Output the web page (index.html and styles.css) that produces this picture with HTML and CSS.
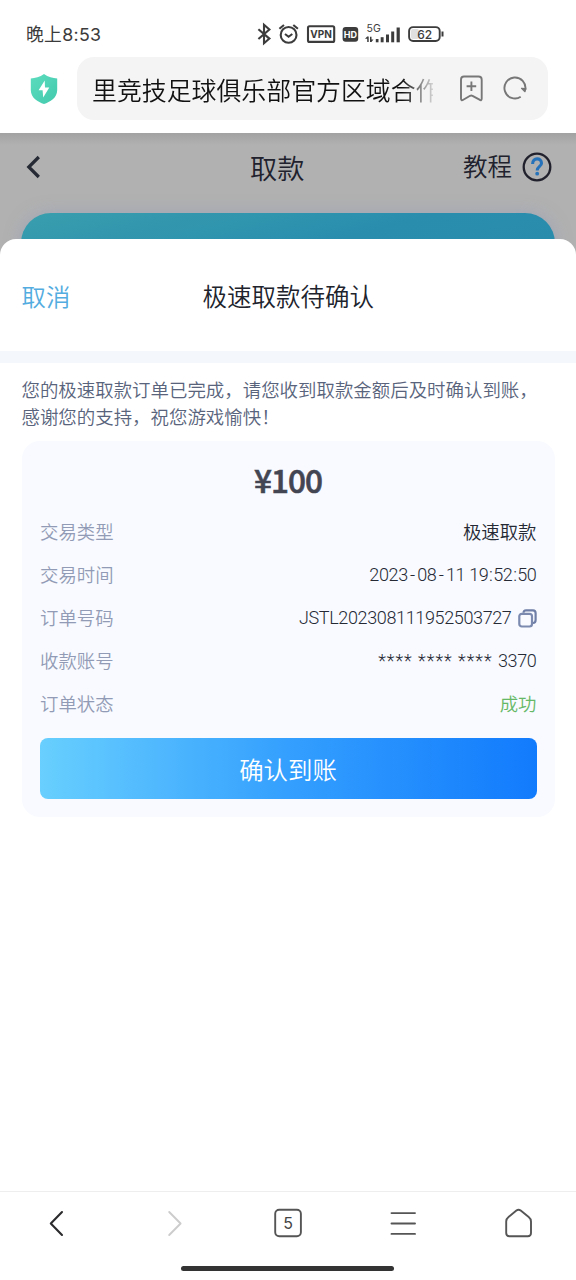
FILE: index.html
```html
<!DOCTYPE html>
<html lang="zh-CN">
<head>
<meta charset="utf-8">
<title>取款</title>
<link rel="stylesheet" href="styles.css">
</head>
<body>
<div class="phone">
  <header class="status">
    <span class="clock">晚上8:53</span>
    <svg class="status-icons" width="200" height="30" viewBox="250 20 200 30">
      <g fill="none" stroke="#3c3c3c" stroke-width="2.1" stroke-linejoin="miter">
        <path d="M258.4 29.2 269.4 38.6 264 43.2V24.800L269.400 29.500 258.400 39"/>
        <circle cx="288.600" cy="34.900" r="7.900"/>
        <path d="M285 34 288.600 36.800 292.300 34M279.400 28.800 284 25M297.900 28.800 293.300 25"/>
        <rect x="308" y="26.300" width="26.200" height="15.600" rx="1.500"/>
        <rect x="409.100" y="27.100" width="30.600" height="13.900" rx="4" stroke-width="1.900"/>
      </g>
      <rect x="342.600" y="27" width="15.600" height="14.800" rx="3" fill="#3c3c3c"/>
      <rect x="411" y="29" width="8" height="10" rx="2" fill="#e0e0e0"/>
      <path d="M442.500 31.500v5" stroke="#3c3c3c" stroke-width="2"/>
      <g fill="#3c3c3c">
        <rect x="375.800" y="39" width="2.700" height="3.300"/>
        <rect x="380.700" y="37.200" width="2.900" height="5.100"/>
        <rect x="386" y="34.500" width="3" height="7.800"/>
        <rect x="391.200" y="31.500" width="3" height="10.800"/>
        <rect x="396.600" y="27.500" width="3.200" height="14.800"/>
        <path d="M365 38.800 367.200 36.500H368.700V42H367.200V38.800ZM370 36.800V42H371.500L373.500 39.600H371.500V36.800Z"/>
      </g>
      <g class="status-text" text-anchor="middle">
        <text x="321.100" y="37.700" font-size="10" font-weight="700">VPN</text>
        <text x="350.400" y="37.600" font-size="9" font-weight="700" class="hd">HD</text>
        <text x="373.700" y="32" font-size="10.500">5G</text>
        <text x="424.700" y="38.500" font-size="12" font-weight="500">62</text>
      </g>
    </svg>
  </header>
  <div class="browser-bar">
    <svg class="shield" width="28" height="32" viewBox="0 0 28 32">
      <defs><linearGradient id="shield-fill" x1="0" y1="0" x2="1" y2="1"><stop offset="0" stop-color="#5cdcbf"/><stop offset="1" stop-color="#43c9ac"/></linearGradient></defs>
      <path d="M14 1 C18 4 23 5 27.200 5.500V17C27.200 25 20 29 14 31 8 29 .8 25 .8 17V5.500C5 5 10 4 14 1Z" fill="url(#shield-fill)"/>
      <path d="M14.700 7.500 8.600 17.200H12.600L13.200 24.600 19.300 14.400H15Z" fill="#fff"/>
    </svg>
    <div class="address">
      <span class="address-text">里竞技足球俱乐部官方区域合作</span>
      <svg class="address-icons" width="70" height="30" viewBox="458 74 70 30" fill="none" stroke="#777" stroke-width="1.900" stroke-linejoin="round">
        <path d="M464 76.500H478.500Q481.700 76.500 481.700 79.700V98.500Q481.700 101.200 479.500 99.700L472.500 95.800Q471.300 95.200 470.100 95.800L463.300 99.700Q461 101.200 461 98.500V79.700Q461 76.500 464 76.500ZM471.400 81.500v9.500M466.600 86.300h9.600"/>
        <path d="M520.700 96.800A10.500 10.500 0 1 1 525.300 89.800"/>
        <path d="M521.500 88.300 525 91.700 525.800 88.500Z" fill="#777" stroke-width="1.200"/>
      </svg>
    </div>
  </div>
  <main class="page">
    <div class="page-header">
      <svg class="back" width="16" height="24" viewBox="0 0 16 24"><path d="M12.800 2 2.800 12 12.800 22" fill="none" stroke="#252a34" stroke-width="3.200"/></svg>
      <h1 class="page-title">取款</h1>
      <span class="tutorial">教程</span>
      <svg class="help" width="30" height="30" viewBox="0 0 30 30" fill="none"><circle cx="15" cy="15" r="13.300" stroke="#20212d" stroke-width="2.300"/><path d="M10.600 12C10.600 5.200 19.500 5.400 19.500 11.200 19.500 14.500 15.200 14.300 15.200 18.500" stroke="#2672ba" stroke-width="3.100"/><circle cx="15.200" cy="21.700" r="1.900" fill="#2672ba"/></svg>
    </div>
    <div class="banner"></div>
  </main>
  <section class="sheet">
    <div class="sheet-header">
      <span class="cancel">取消</span>
      <h2 class="sheet-title">极速取款待确认</h2>
    </div>
    <div class="sheet-body">
      <p class="notice">您的极速取款订单已完成，请您收到取款金额后及时确认到账，<br>感谢您的支持，祝您游戏愉快！</p>
      <div class="card">
        <div class="amount">¥100</div>
        <div class="row"><span class="label">交易类型</span><span class="value">极速取款</span></div>
        <div class="row"><span class="label">交易时间</span><span class="value number">2023<span class="dash">-</span>08<span class="dash">-</span>11 19<span class="colon">:</span>52<span class="colon">:</span>50</span></div>
        <div class="row"><span class="label">订单号码</span><span class="value number">JSTL202308111952503727</span>
          <svg class="copy" width="19" height="19" viewBox="0 0 19 19" fill="none" stroke-width="2.200"><path d="M5.500 3.800Q5.500 1.300 8 1.300H15Q17.600 1.300 17.600 4V11Q17.600 14 15 14" stroke="#6f7ea6"/><rect x="1.300" y="4.800" width="12.700" height="12.700" rx="2.500" stroke="#7c8ab0"/></svg>
        </div>
        <div class="row"><span class="label">收款账号</span><span class="value number"><span class="masked">**** **** **** </span>3370</span></div>
        <div class="row"><span class="label">订单状态</span><span class="value success">成功</span></div>
        <button class="confirm">确认到账</button>
      </div>
    </div>
  </section>
  <nav class="toolbar">
    <svg class="nav-icons" width="576" height="50" viewBox="0 1198 576 50" fill="none" stroke="#555" stroke-width="1.900" stroke-linecap="round" stroke-linejoin="round">
      <path d="M62 1212 50.800 1223.500 62 1235" stroke="#2b2b2d" stroke-width="2.100"/>
      <path d="M169.200 1212 180.600 1223.500 169.200 1235" stroke="#ccc"/>
      <rect x="275.200" y="1209.700" width="25.700" height="26.500" rx="4"/>
      <path d="M391.500 1213.100h23.500M391.500 1223.500h23.500M391.500 1233.900h23.500"/>
      <path d="M508.500 1217Q506.200 1218.800 506.200 1221.500V1233Q506.200 1236.200 509.400 1236.200H527.800Q531 1236.200 531 1233V1221.500Q531 1218.800 528.700 1217L520.700 1210.500Q518.500 1209 516.400 1210.500Z"/>
      <text class="tab-count" x="288.100" y="1229.300" text-anchor="middle">5</text>
    </svg>
    <div class="home-handle"></div>
  </nav>
</div>
</body>
</html>
```
FILE: styles.css
```css
* { box-sizing: border-box; }
body { margin: 0; background: #fff; font-family: "Noto Sans CJK SC", sans-serif; color: #292d37; }
h1, h2, p { margin: 0; font-weight: 350; }
svg { display: block; flex: none; }
.phone { width: 576px; height: 1280px; display: flex; flex-direction: column; overflow: hidden; }
.status { height: 57px; display: flex; align-items: center; padding: 13px 0 0 26px; }
.clock { width: 224px; font: 400 17.800px/26px Inter, "Noto Sans CJK SC", sans-serif; color: #3c3c3c; letter-spacing: .3px; }
.status-icons { margin-top: -1px; }
.status-text { font-family: Inter, sans-serif; fill: #3c3c3c; }
.status-text .hd { fill: #fff; }
.browser-bar { height: 76px; display: flex; align-items: flex-start; }
.shield { margin: 16px 19px 0 30px; }
.address { width: 471px; height: 63px; background: #f4f4f4; border-radius: 17px; display: flex; align-items: center; padding-left: 15px; }
.address-text { width: 341px; overflow: hidden; white-space: nowrap; font-size: 24.900px; line-height: 40px; font-weight: 350; color: #111; -webkit-mask-image: linear-gradient(90deg, #000 310px, transparent 346px); mask-image: linear-gradient(90deg, #000 310px, transparent 346px); }
.address-icons { margin: 1px 0 0 25px; }
.page { height: 130px; flex: none; background: linear-gradient(#a2a2a2, #b1b1b1 12px); overflow: hidden; }
.page-header { height: 80px; display: grid; grid-template-columns: 250px 54px 159px 59px 30px; align-items: start; }
.back { margin: 22px 0 0 26px; }
.page-title { font-size: 27.200px; line-height: 40px; margin-top: 14px; grid-column: 2; white-space: nowrap; color: #20212d; }
.tutorial { grid-column: 4; font-size: 24.500px; font-weight: 350; line-height: 36px; margin-top: 15px; color: #20212d; }
.help { margin-top: 19px; }
.banner { height: 80px; margin: 0 21px; border-radius: 30px; background: linear-gradient(165deg, #399ead, #298eae 50%, #2b8aac); box-shadow: 0 0 16px #8f9ac088; }
.sheet { position: relative; margin-top: -24px; height: 952px; flex: none; border-radius: 16px 16px 0 0; background: #fff; }
.sheet-header { height: 124px; border-bottom: 12px solid #f4f8fd; display: grid; grid-template-columns: 180.500px 1fr; padding: 39px 0 0 22px; font-size: 24.400px; line-height: 36px; font-weight: 350; }
.cancel { color: #53acdf; margin-left: -.5px; }
.sheet-title { font-size: 24.500px; color: #20232c; }
.sheet-body { padding: 13px 21.500px 0; }
.notice { font-size: 18.450px; line-height: 27px; color: #59647c; white-space: nowrap; }
.card { height: 376px; margin-top: 11px; padding: 17px 18px 0; border-radius: 18px; background: #f8faff; }
.amount { height: 51px; text-align: center; font-size: 31.500px; line-height: 43px; font-weight: 500; letter-spacing: -.9px; color: #434652; -webkit-text-stroke: .6px #434652; }
.row { height: 43px; display: flex; align-items: center; font-size: 18.400px; font-weight: 350; }
.label { flex: 1; color: #929bb5; margin-left: .5px; }
.value { color: #252934; }
.number { font-family: Roboto, sans-serif; font-weight: 350; font-size: 18px; letter-spacing: -.36px; margin: 2px 0 0; white-space: pre; }
.dash { padding: 0 2.300px; }
.colon { padding: 0 .7px; }
.masked { letter-spacing: 1px; }
.copy { margin: 4px 0 0 6px; }
.success { color: #66b867; }
.confirm { display: block; width: 100%; height: 61px; margin-top: 14px; border: 0; border-radius: 8px; background: linear-gradient(90deg, #68cffe, #349ffe 50%, #117bfd); color: #fff; font: 350 24.400px/36px "Noto Sans CJK SC", sans-serif; padding: 0; }
.toolbar { height: 89px; flex: none; border-top: 1px solid #eee; padding-top: 6px; }
.tab-count { font: 400 16px Inter, sans-serif; fill: #444; stroke: none; }
.home-handle { width: 213px; height: 5px; margin: 18px 0 0 181px; border-radius: 3px; background: #333; }
```
